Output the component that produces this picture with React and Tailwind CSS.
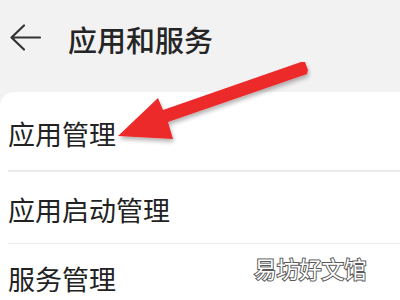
import React from "react";

const font = { fontFamily: '"Noto Sans CJK SC", "Noto Sans", sans-serif' };

export default function App() {
  return (
    <div className="relative w-[400px] h-[300px] overflow-hidden bg-[#f2f2f2] font-['Noto_Sans_CJK_SC',sans-serif]">
      <div className="h-[92px] pt-[21px] flex items-start">
        <div className="flex items-center h-[36px]">
          <svg width="50" height="36" viewBox="0 0 50 36" className="shrink-0">
            <path d="M40 16.5H11.5M24 4.5L11.5 16.5L24 28.5" fill="none" stroke="#333" strokeWidth="2.2" strokeLinecap="round" strokeLinejoin="round" />
          </svg>
          <span className="ml-[18px] text-[29px] leading-[36px] font-medium text-[#252525]">应用和服务</span>
        </div>
      </div>
      <div className="bg-white rounded-tl-[14px] h-[208px] pl-[8px]">
        <div className="h-[78px] flex items-start pt-[25px]">
          <span className="text-[27px] leading-[34px] text-[#222]">应用管理</span>
        </div>
        <div className="h-[1.5px] bg-[#ebebeb]" />
        <div className="h-[71px] flex items-start pt-[21px]">
          <span className="text-[27px] leading-[34px] text-[#222]">应用启动管理</span>
        </div>
        <div className="h-[1.5px] bg-[#ebebeb]" />
        <div className="flex items-start pt-[18px]">
          <span className="text-[27px] leading-[34px] text-[#222]">服务管理</span>
        </div>
      </div>
      <svg className="absolute inset-0" width="400" height="300" viewBox="0 0 400 300">
        <defs>
          <filter id="sh" x="-10%" y="-10%" width="130%" height="140%">
            <feGaussianBlur in="SourceAlpha" stdDeviation="2" />
            <feOffset dx="1" dy="3" result="b" />
            <feComponentTransfer><feFuncA type="linear" slope="0.3" /></feComponentTransfer>
            <feMerge><feMergeNode /><feMergeNode in="SourceGraphic" /></feMerge>
          </filter>
        </defs>
        <polygon
          points="118,136 158,98 163,110 301,62 305,62 308,70 307,74 168,122 173,139"
          fill="#ec2a2c"
          filter="url(#sh)"
        />
      </svg>
      <div className="absolute left-[254px] top-[254px] text-[22.5px] leading-[28px] text-white [-webkit-text-stroke:2px_#5a5a5a] [paint-order:stroke_fill] tracking-[0px]">
        易坊好文馆
      </div>
    </div>
  );
}
